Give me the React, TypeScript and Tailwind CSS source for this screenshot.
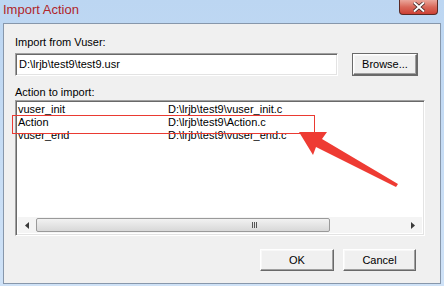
import React from "react";

const sunken =
  "border border-t-[#a0a0a0] border-l-[#a0a0a0] border-b-white border-r-white shadow-[inset_1px_1px_0_#696969,inset_-1px_-1px_0_#e3e3e3]";
const raised =
  "border border-t-white border-l-white border-b-[#696969] border-r-[#696969] shadow-[inset_-1px_-1px_0_#a0a0a0,inset_1px_1px_0_#f8f8f8] bg-[#f0f0f0]";

const actions = [
  { name: "vuser_init", path: "D:\\lrjb\\test9\\vuser_init.c" },
  { name: "Action", path: "D:\\lrjb\\test9\\Action.c" },
  { name: "vuser_end", path: "D:\\lrjb\\test9\\vuser_end.c" },
];

function CloseButton() {
  return (
    <div className="mr-[6px] flex h-[15px] w-[39px] items-center justify-center rounded-b-[4px] border border-t-0 border-[#5a2a24] bg-gradient-to-b from-[#eaa69b] via-[#d9685a] to-[#cc3f33]">
      <svg width="12" height="10" viewBox="0 0 12 10">
        <path d="M1 0.5 L11 9.5 M11 0.5 L1 9.5" stroke="#3b2020" strokeWidth="3.4" />
        <path d="M1 0.5 L11 9.5 M11 0.5 L1 9.5" stroke="#ffffff" strokeWidth="2" />
      </svg>
    </div>
  );
}

function ScrollBar() {
  return (
    <div className="flex h-[16px] w-full bg-[#f4f4f4]">
      <div className="flex w-[18px] items-center justify-center">
        <svg width="4" height="7" viewBox="0 0 4 7">
          <path d="M4 0 L0 3.5 L4 7 Z" fill="#3a3a3a" />
        </svg>
      </div>
      <div className="mt-[1px] flex h-[14px] w-[294px] items-center justify-center rounded-[2px] border border-[#9a9a9a] bg-gradient-to-b from-[#f2f2f2] to-[#d8d8d8]">
        <div className="ml-[142px] flex gap-[1px]">
          <div className="h-[6px] w-[1px] bg-[#555]" />
          <div className="h-[6px] w-[1px] bg-[#555]" />
          <div className="h-[6px] w-[1px] bg-[#555]" />
        </div>
      </div>
      <div className="flex-1" />
      <div className="flex w-[18px] items-center justify-center">
        <svg width="4" height="7" viewBox="0 0 4 7">
          <path d="M0 0 L4 3.5 L0 7 Z" fill="#3a3a3a" />
        </svg>
      </div>
    </div>
  );
}

export default function App() {
  return (
    <div
      className="relative flex h-[286px] w-[444px] flex-col overflow-hidden bg-gradient-to-b from-[#bcd6f2] to-[#cfe2f7] text-[11px] text-black"
      style={{ fontFamily: '"Liberation Sans", Arial, sans-serif' }}
    >
      {/* title bar */}
      <div className="flex h-[23px] items-start justify-between">
        <div className="pl-[3px] pt-[2px] text-[13px] leading-[16px] text-[#b0262a]">Import Action</div>
        <CloseButton />
      </div>

      {/* client area */}
      <div className="mx-[3px] mb-[2px] flex flex-1 flex-col border border-[#8797ab] bg-[#f0f0f0] px-[11px] pt-[12px]">
        <div className="leading-[13px]">Import from Vuser:</div>
        <div className="mt-[4px] flex items-center">
          <div className={`flex h-[23px] w-[323px] items-center bg-white pl-[3px] ${sunken}`}>
            D:\lrjb\test9\test9.usr
          </div>
          <button
            className={`ml-[15px] flex h-[21px] w-[64px] items-center justify-center outline outline-1 outline-[#6a6a6a] ${raised}`}
          >
            Browse...
          </button>
        </div>

        <div className="mt-[10px] leading-[13px]">Action to import:</div>
        <div className={`mt-[1px] flex h-[136px] w-[410px] flex-col bg-white p-[2px] ${sunken}`}>
          <div className="flex-1">
            {actions.map((a) => (
              <div key={a.name} className="flex h-[13px] items-center leading-[13px]">
                <div className="w-[150px]">{a.name}</div>
                <div>{a.path}</div>
              </div>
            ))}
          </div>
          <ScrollBar />
        </div>

        <div className="mt-[13px] flex justify-end gap-[9px] pr-[13px]">
          <button className={`flex h-[22px] w-[74px] items-center justify-center ${raised}`}>OK</button>
          <button className={`flex h-[22px] w-[73px] items-center justify-center ${raised}`}>Cancel</button>
        </div>
      </div>

      {/* annotation: red box + arrow */}
      <div className="pointer-events-none absolute left-[12px] top-[115px] h-[19px] w-[303px] border-[1.5px] border-[#ea3a32]" />
      <svg
        className="pointer-events-none absolute left-0 top-0"
        width="444"
        height="286"
        viewBox="0 0 444 286"
      >
        <path
          d="M299 132 L327 132 L322 139 L398 184 L396 187 L316 147 L313 155 Z"
          fill="#ee3b33"
        />
      </svg>
    </div>
  );
}
